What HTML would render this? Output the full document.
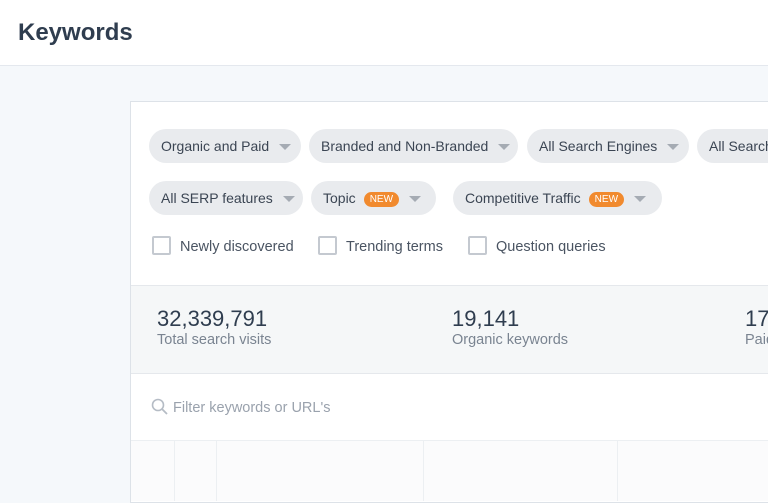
<!DOCTYPE html><html><head><style>
body{margin:0;width:768px;height:456px;overflow:hidden;background:#f5f8fb;font-family:"Liberation Sans",sans-serif;position:relative}
.hd{position:absolute;left:0;top:0;width:768px;height:65px;background:#fff;border-bottom:1px solid #e4e8ee}
.hd h1{margin:0;position:absolute;left:18px;top:19px;font-size:24px;font-weight:bold;color:#2f3d4f}
.card{position:absolute;left:130px;top:101px;width:660px;height:400px;background:#fff;border:1px solid #dde2e8}
.pill{position:absolute;height:34px;border-radius:17px;background:#e9ebee;color:#3b4553;font-size:14px;line-height:34px;padding-left:12px;white-space:nowrap;box-sizing:border-box}
.pill i{display:inline-block;width:0;height:0;border-left:6px solid transparent;border-right:6px solid transparent;border-top:6px solid #a5abb3;vertical-align:middle;margin-left:10px}
.new{display:inline-block;background:#f18a2e;color:#fff;font-size:10px;line-height:15px;padding:0 6px;border-radius:8px;margin-left:8px;vertical-align:1px}
.cb{position:absolute;top:134px;font-size:14.5px;color:#4a5462}
.cb b{display:inline-block;width:19px;height:19px;border:2px solid #c4c9d0;border-radius:2px;box-sizing:border-box;vertical-align:-4px;margin-right:9px}
.stats{position:absolute;left:0;top:183px;width:660px;height:87px;background:#f5f7f8;border-top:1px solid #e5e8ec;border-bottom:1px solid #e5e8ec}
.st{position:absolute;top:20px;color:#2f3d4f}
.st .n{font-size:22px}.st .l{font-size:14.5px;color:#7a8491}
.srch{position:absolute;left:20px;top:296px;font-size:14.5px;color:#9aa2ad}
.th{position:absolute;left:0;top:338px;width:660px;height:60px;border-top:1px solid #eceff2;background:#fbfbfc}
.th span{position:absolute;top:0;height:60px;border-left:1px solid #eceff2}
</style></head><body>
<div class="hd"><h1>Keywords</h1></div>
<div class="card">
<div class="pill" style="left:18px;top:27px;width:152px">Organic and Paid<i></i></div>
<div class="pill" style="left:178px;top:27px;width:209px">Branded and Non-Branded<i></i></div>
<div class="pill" style="left:396px;top:27px;width:162px">All Search Engines<i></i></div>
<div class="pill" style="left:566px;top:27px;width:160px">All Search</div>
<div class="pill" style="left:18px;top:79px;width:154px">All SERP features<i></i></div>
<div class="pill" style="left:180px;top:79px;width:125px">Topic<span class="new">NEW</span><i></i></div>
<div class="pill" style="left:322px;top:79px;width:209px">Competitive Traffic<span class="new">NEW</span><i></i></div>
<div class="cb" style="left:21px"><b></b>Newly discovered</div>
<div class="cb" style="left:187px"><b></b>Trending terms</div>
<div class="cb" style="left:337px"><b></b>Question queries</div>
<div class="stats">
<div class="st" style="left:26px"><div class="n">32,339,791</div><div class="l">Total search visits</div></div>
<div class="st" style="left:321px"><div class="n">19,141</div><div class="l">Organic keywords</div></div>
<div class="st" style="left:614px"><div class="n">17</div><div class="l">Paid</div></div>
</div>
<div class="srch"><svg width="18" height="18" viewBox="0 0 18 18" style="vertical-align:-4px;margin-right:4px"><circle cx="7" cy="7" r="5.5" fill="none" stroke="#b5bcc5" stroke-width="1.6"/><path d="M11 11l5 5" stroke="#b5bcc5" stroke-width="1.8"/></svg>Filter keywords or URL's</div>
<div class="th"><span style="left:43px"></span><span style="left:85px"></span><span style="left:292px"></span><span style="left:486px"></span></div>
</div>
</body></html>
